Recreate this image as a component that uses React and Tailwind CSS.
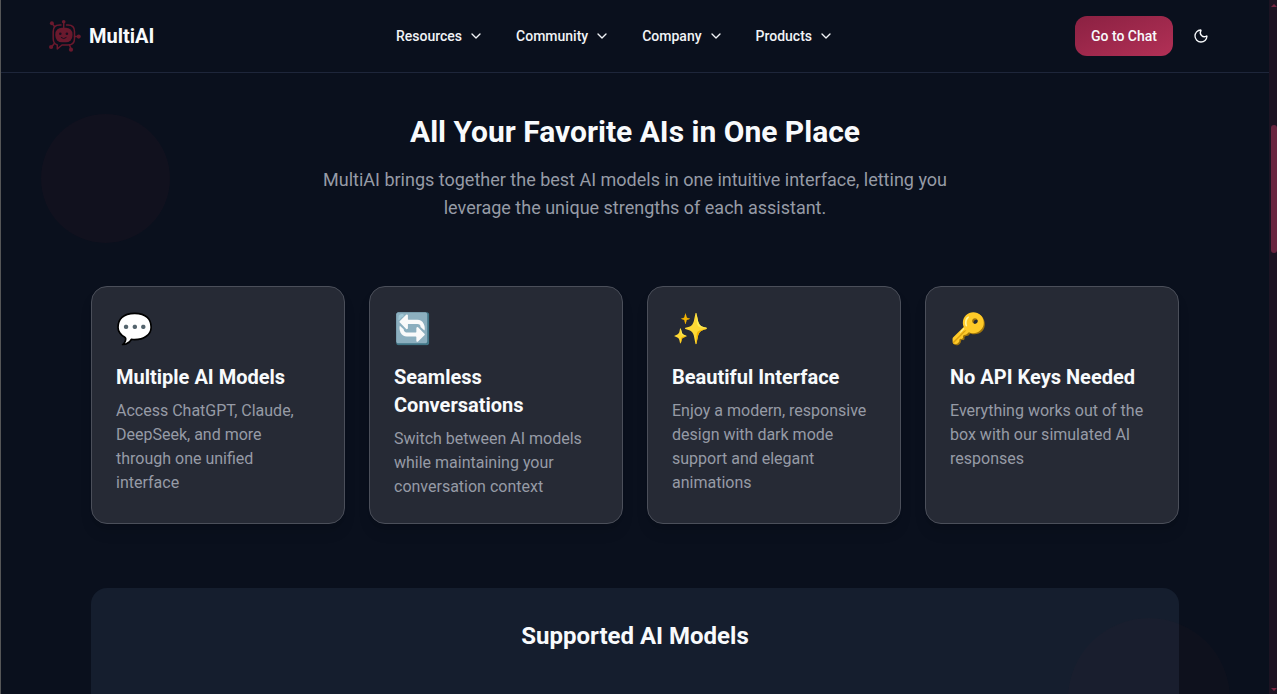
import React from "react";
import { ChevronDown, Moon } from "lucide-react";

const navItems = ["Resources", "Community", "Company", "Products"];

const features = [
  { icon: "💬", title: "Multiple AI Models", text: "Access ChatGPT, Claude, DeepSeek, and more through one unified interface" },
  { icon: "🔄", title: "Seamless Conversations", text: "Switch between AI models while maintaining your conversation context" },
  { icon: "✨", title: "Beautiful Interface", text: "Enjoy a modern, responsive design with dark mode support and elegant animations" },
  { icon: "🔑", title: "No API Keys Needed", text: "Everything works out of the box with our simulated AI responses" },
];

function Logo() {
  return (
    <svg viewBox="0 0 32 34" className="h-[34px] w-8 shrink-0" fill="none" stroke="#6a192d" strokeWidth="1.5" strokeLinecap="round" strokeLinejoin="round">
      <path d="M12 6H10.500Q4.200 6 4.200 12.500V19.500Q4.200 24.500 8.300 26V30L13 26H19Q25.500 26 25.500 19.500V12.500Q25.500 6 19 6H17.500" />
      <path d="M14.700 3V9M3 4.500L5.500 7.500M25.500 17.600H29.500M5.300 24.500L2.500 28M20.500 26L22 30" />
      <rect x="6.300" y="8.700" width="17.200" height="14.600" rx="6.500" fill="#6a192d" stroke="none" />
      <g fill="#6a192d" stroke="none">
        <circle cx="14.700" cy="2.800" r="1.800" />
        <circle cx="2.900" cy="4.300" r="2" />
        <circle cx="29.700" cy="17.600" r="2.100" />
        <circle cx="2.100" cy="28" r="2.100" />
        <circle cx="22" cy="30.700" r="2.100" />
      </g>
      <g fill="#190f20" stroke="none">
        <circle cx="11.300" cy="14.800" r="1.300" />
        <circle cx="17.900" cy="14.800" r="1.300" />
      </g>
      <path d="M12.200 18.600Q14.700 20.800 17.200 18.600" stroke="#190f20" strokeWidth="1" />
    </svg>
  );
}

function Header() {
  return (
    <header className="flex h-[73px] items-center justify-between border-b border-[#1e263a] px-12">
      <div className="flex w-[300px] items-center gap-2">
        <Logo />
        <span className="text-xl font-bold">MultiAI</span>
      </div>
      <nav className="flex gap-8">
        {navItems.map((item) => (
          <button key={item} className="flex items-center gap-1.5 text-sm font-medium text-[#f1f3f6]">
            {item}
            <ChevronDown size={16} />
          </button>
        ))}
      </nav>
      <div className="flex w-[340px] items-center justify-end gap-2">
        <button className="h-10 w-[98px] rounded-xl bg-linear-to-br from-[#8b2142] to-[#b23056] text-sm font-medium">Go to Chat</button>
        <button className="flex size-10 items-center justify-center"><Moon size={16} /></button>
      </div>
    </header>
  );
}

function Scrollbar() {
  return (
    <div className="flex w-2 shrink-0 flex-col items-end bg-[#1c1322]">
      <svg viewBox="0 0 6 3" className="mt-1 h-[3px] w-1.5" fill="#762541"><path d="M0 3L3 0L6 3Z" /></svg>
      <div className="mt-[118px] h-32 w-1.5 rounded-full bg-[#692540]" />
      <svg viewBox="0 0 6 3" className="mt-auto mb-[3px] h-[3px] w-1.5" fill="#762541"><path d="M0 0L3 3L6 0Z" /></svg>
    </div>
  );
}

export default function App() {
  return (
    <div className="flex h-[694px] overflow-hidden bg-[#0a101d] font-[Roboto,'Noto_Color_Emoji',sans-serif] text-[#f8fafc]">
      <div className="w-px shrink-0 bg-[#555657]" />
      <div className="relative min-w-0 flex-1 overflow-hidden">
        <Header />
        <main className="px-[90px] pt-[41px]">
          <div className="mx-auto w-[672px] text-center">
            <h2 className="text-3xl font-bold">All Your Favorite AIs in One Place</h2>
            <p className="mt-4 text-lg leading-7 text-[#969ba6]">
              MultiAI brings together the best AI models in one intuitive interface, letting you leverage the unique strengths of each assistant.
            </p>
          </div>
          <div className="mt-16 grid grid-cols-4 gap-6">
            {features.map((f) => (
              <article key={f.title} className="h-[238px] rounded-2xl border border-[#4b4f5a] bg-[#262a35] p-6 shadow-lg">
                <div className="h-10 text-3xl leading-9">{f.icon}</div>
                <h3 className="mt-3 text-xl leading-7 font-bold">{f.title}</h3>
                <p className="mt-2 text-base leading-6 text-[#969ba6]">{f.text}</p>
              </article>
            ))}
          </div>
          <section className="mt-16 h-40 rounded-2xl bg-[#151e2e] pt-8 text-center">
            <h2 className="text-2xl font-bold">Supported AI Models</h2>
          </section>
        </main>
        <div className="absolute top-[114px] left-[39.500px] size-[129px] rounded-full bg-[#992840]/[0.05]" />
        <div className="absolute top-[618px] left-[1067px] size-[162px] rounded-full bg-[#8b2830]/[0.04]" />
      </div>
      <Scrollbar />
    </div>
  );
}
